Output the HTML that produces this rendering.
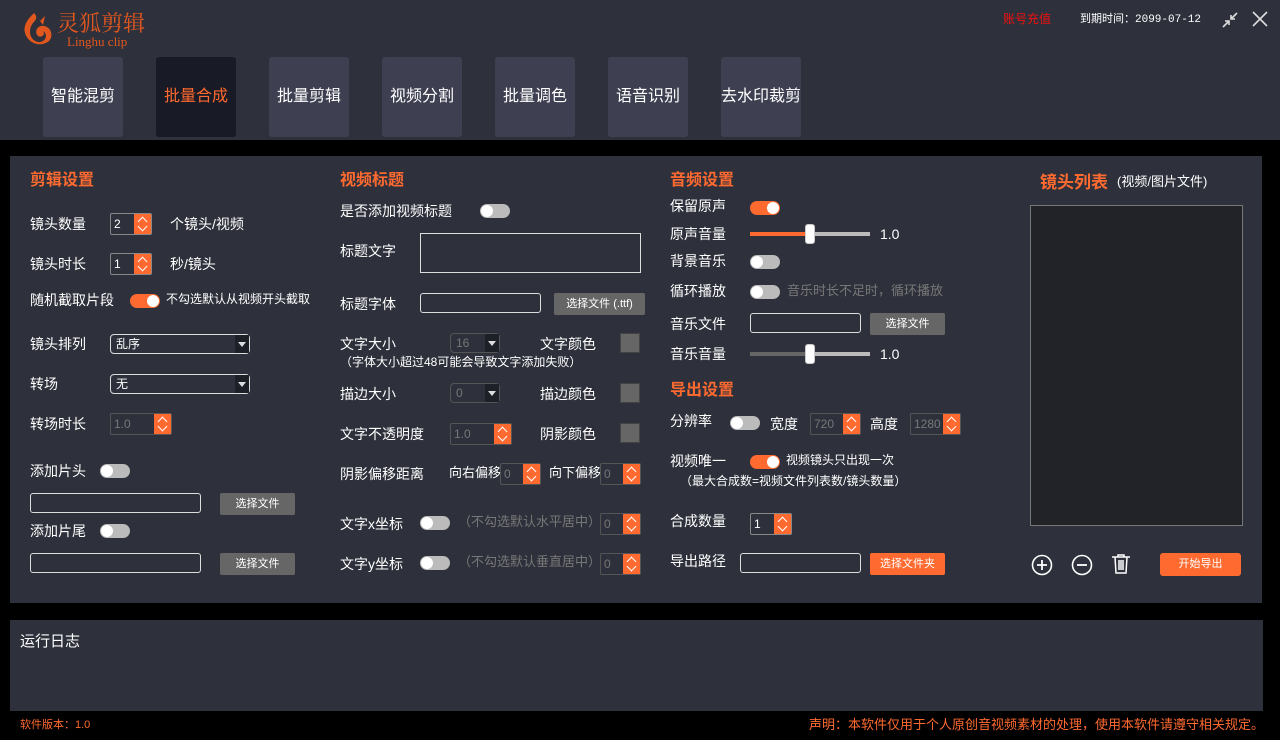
<!DOCTYPE html>
<html><head><meta charset="utf-8"><style>
*{margin:0;padding:0;box-sizing:border-box}
body{width:1280px;height:740px;background:#000;font-family:"Liberation Sans","Noto Sans CJK SC",sans-serif;color:#fff;position:relative;overflow:hidden;font-size:14px}
.a{position:absolute;white-space:nowrap;line-height:1.15}
.hdr{left:0;top:0;width:1280px;height:140px;background:#2e313b}
.tab{top:57px;width:80px;height:80px;background:#3e4052;border-radius:3px;font-size:16px;line-height:80px;text-align:center}
.panel{background:#2e313b}
.h{color:#ff6a30;font-size:16px;font-weight:bold}
.spin{height:22px;border:1px solid #888;border-radius:2px;background:#2e313b;font-size:12px;line-height:20px;padding-left:3px;color:#fff}
.spin i{position:absolute;right:0;top:0;width:17px;height:20px;background:#ff6a30}
.spin i:before{content:"";position:absolute;left:5px;top:4px;width:6px;height:6px;border-left:1.5px solid #fff;border-top:1.5px solid #fff;transform:rotate(45deg)}
.spin i:after{content:"";position:absolute;left:5px;top:9px;width:6px;height:6px;border-right:1.5px solid #fff;border-bottom:1.5px solid #fff;transform:rotate(45deg)}
.dis{color:#777;border-color:#555}
.tg{width:30px;height:14px;border-radius:7px;background:#bbb}
.tg:after{content:"";position:absolute;left:1px;top:1px;width:12px;height:12px;border-radius:6px;background:#fff}
.tg.on{background:#ff6a30}.tg.on:after{left:17px}
.inp{height:20px;border:1px solid #ddd;border-radius:3px;background:#2e313b}
.btn{height:22px;background:#666;border-radius:2px;font-size:11px;line-height:22px;text-align:center}
.ob{background:#ff6a30}
.sel{height:20px;border:1px solid #ddd;border-radius:4px;font-size:12px;line-height:18px;padding-left:5px}
.sel i{position:absolute;right:0;top:0;width:14px;height:18px;background:#1e2028}
.sel i:after{content:"";position:absolute;left:3px;top:7px;border:4px solid transparent;border-top:5px solid #ddd}
.sel.d{border-color:#555;color:#777}
.sw{width:20px;height:20px;background:#666;border:1px solid #444}
.g{color:#777;font-size:13px}
.sl{height:4px;background:#bbb}
.knob{width:10px;height:20px;background:#fff;border-radius:3px;border:1px solid #ccc}
</style></head><body>
<div class="a hdr"></div>
<svg class="a" style="left:20px;top:10px" width="34" height="40" viewBox="0 0 34 38"><path d="M14 2 C8 8 3 14 5 22 C8 32 20 37 29 30 C34 25 31 16 24 15 C17 14 14 21 18 25 C21 27 26 24 23 20 C29 24 25 32 18 31 C9 29 8 18 13 12 C16 9 18 6 14 2Z" fill="#e2571e"/><path d="M15 3 L20 10 L25 5 L23 14Z" fill="#e2571e"/></svg>
<div class="a" style="left:57px;top:10px;font-size:22px;color:#e2571e;font-family:'Noto Serif CJK SC',serif">灵狐剪辑</div>
<div class="a" style="left:67px;top:35px;font-size:13px;color:#e2571e;font-family:'Liberation Serif',serif">Linghu clip</div>
<div class="a" style="left:1003px;top:13px;font-size:12px;color:#f01010">账号充值</div>
<div class="a" style="left:1080px;top:13px;font-size:11px">到期时间：<span style="font-family:'Liberation Mono',monospace;font-size:11px">2099-07-12</span></div>
<svg class="a" style="left:1221px;top:11px" width="18" height="18"><path d="M2 16 L8 10 M4 10 H8 V14 M16 2 L10 8 M10 4 V8 H14" stroke="#ddd" stroke-width="1.6" fill="none"/></svg>
<svg class="a" style="left:1251px;top:10px" width="18" height="18"><path d="M2 2 L16 16 M16 2 L2 16" stroke="#ddd" stroke-width="1.6"/></svg>
<div class="a tab" style="left:43px;line-height:80px">智能混剪</div>
<div class="a tab" style="left:156px;background:#181a25;color:#ff6a30;line-height:80px">批量合成</div>
<div class="a tab" style="left:269px;line-height:80px">批量剪辑</div>
<div class="a tab" style="left:382px;line-height:80px">视频分割</div>
<div class="a tab" style="left:495px;line-height:80px">批量调色</div>
<div class="a tab" style="left:608px;line-height:80px">语音识别</div>
<div class="a tab" style="left:721px;line-height:80px">去水印裁剪</div>

<div class="a panel" style="left:10px;top:156px;width:1252px;height:447px"></div>
<div class="a h" style="left:30px;top:172px">剪辑设置</div>
<div class="a" style="left:30px;top:216px">镜头数量</div>
<div class="a spin" style="left:110px;top:213px;width:42px;line-height:20px">2<i></i></div>
<div class="a" style="left:170px;top:216px">个镜头/视频</div>
<div class="a" style="left:30px;top:256px">镜头时长</div>
<div class="a spin" style="left:110px;top:253px;width:42px;line-height:20px">1<i></i></div>
<div class="a" style="left:170px;top:256px">秒/镜头</div>
<div class="a" style="left:30px;top:292px">随机截取片段</div>
<div class="a tg on" style="left:130px;top:294px"></div>
<div class="a" style="left:166px;top:293px;font-size:12px">不勾选默认从视频开头截取</div>
<div class="a" style="left:30px;top:336px">镜头排列</div>
<div class="a sel" style="left:110px;top:334px;width:140px;line-height:18px">乱序<i></i></div>
<div class="a" style="left:30px;top:376px">转场</div>
<div class="a sel" style="left:110px;top:374px;width:140px;line-height:18px">无<i></i></div>
<div class="a" style="left:30px;top:416px">转场时长</div>
<div class="a spin dis" style="left:110px;top:413px;width:62px;line-height:20px">1.0<i></i></div>
<div class="a" style="left:30px;top:463px">添加片头</div>
<div class="a tg" style="left:100px;top:464px"></div>
<div class="a inp" style="left:30px;top:493px;width:171px"></div>
<div class="a btn" style="left:220px;top:493px;width:75px;line-height:22px">选择文件</div>
<div class="a" style="left:30px;top:523px">添加片尾</div>
<div class="a tg" style="left:100px;top:524px"></div>
<div class="a inp" style="left:30px;top:553px;width:171px"></div>
<div class="a btn" style="left:220px;top:553px;width:75px;line-height:22px">选择文件</div>

<div class="a h" style="left:340px;top:172px">视频标题</div>
<div class="a" style="left:340px;top:203px">是否添加视频标题</div>
<div class="a tg" style="left:480px;top:204px"></div>
<div class="a" style="left:340px;top:243px">标题文字</div>
<div class="a inp" style="left:420px;top:233px;width:221px;height:40px;border-radius:0"></div>
<div class="a" style="left:340px;top:296px">标题字体</div>
<div class="a inp" style="left:420px;top:293px;width:121px"></div>
<div class="a btn" style="left:554px;top:293px;width:91px;line-height:22px">选择文件 (.ttf)</div>
<div class="a" style="left:340px;top:336px">文字大小</div>
<div class="a sel d" style="left:450px;top:333px;width:50px;line-height:18px">16<i></i></div>
<div class="a" style="left:540px;top:336px">文字颜色</div>
<div class="a sw" style="left:620px;top:333px"></div>
<div class="a" style="left:340px;top:356px;font-size:12px">（字体大小超过48可能会导致文字添加失败）</div>
<div class="a" style="left:340px;top:386px">描边大小</div>
<div class="a sel d" style="left:450px;top:383px;width:50px;line-height:18px">0<i></i></div>
<div class="a" style="left:540px;top:386px">描边颜色</div>
<div class="a sw" style="left:620px;top:383px"></div>
<div class="a" style="left:340px;top:426px">文字不透明度</div>
<div class="a spin dis" style="left:450px;top:423px;width:62px;line-height:20px">1.0<i></i></div>
<div class="a" style="left:540px;top:426px">阴影颜色</div>
<div class="a sw" style="left:620px;top:423px"></div>
<div class="a" style="left:340px;top:466px">阴影偏移距离</div>
<div class="a" style="left:449px;top:466px;font-size:13px">向右偏移</div>
<div class="a spin dis" style="left:500px;top:463px;width:41px;line-height:20px">0<i></i></div>
<div class="a" style="left:549px;top:466px;font-size:13px">向下偏移</div>
<div class="a spin dis" style="left:600px;top:463px;width:41px;line-height:20px">0<i></i></div>
<div class="a" style="left:340px;top:516px">文字x坐标</div>
<div class="a tg" style="left:420px;top:516px"></div>
<div class="a g" style="left:458px;top:515px">（不勾选默认水平居中）</div>
<div class="a spin dis" style="left:600px;top:513px;width:41px;line-height:20px">0<i></i></div>
<div class="a" style="left:340px;top:556px">文字y坐标</div>
<div class="a tg" style="left:420px;top:556px"></div>
<div class="a g" style="left:458px;top:555px">（不勾选默认垂直居中）</div>
<div class="a spin dis" style="left:600px;top:553px;width:41px;line-height:20px">0<i></i></div>

<div class="a h" style="left:670px;top:172px">音频设置</div>
<div class="a" style="left:670px;top:198px">保留原声</div>
<div class="a tg on" style="left:750px;top:201px"></div>
<div class="a" style="left:670px;top:226px">原声音量</div>
<div class="a sl" style="left:750px;top:232px;width:120px"></div>
<div class="a sl" style="left:750px;top:232px;width:60px;background:#ff6a30"></div>
<div class="a knob" style="left:805px;top:224px"></div>
<div class="a" style="left:880px;top:226px">1.0</div>
<div class="a" style="left:670px;top:253px">背景音乐</div>
<div class="a tg" style="left:750px;top:255px"></div>
<div class="a" style="left:670px;top:283px">循环播放</div>
<div class="a tg" style="left:750px;top:285px"></div>
<div class="a g" style="left:787px;top:284px">音乐时长不足时，循环播放</div>
<div class="a" style="left:670px;top:316px">音乐文件</div>
<div class="a inp" style="left:750px;top:313px;width:111px"></div>
<div class="a btn" style="left:870px;top:313px;width:75px;line-height:22px">选择文件</div>
<div class="a" style="left:670px;top:346px">音乐音量</div>
<div class="a sl" style="left:750px;top:352px;width:120px"></div>
<div class="a sl" style="left:750px;top:352px;width:60px;background:#666"></div>
<div class="a knob" style="left:805px;top:344px"></div>
<div class="a" style="left:880px;top:346px">1.0</div>
<div class="a h" style="left:670px;top:382px">导出设置</div>
<div class="a" style="left:670px;top:413px">分辨率</div>
<div class="a tg" style="left:730px;top:416px"></div>
<div class="a" style="left:770px;top:416px">宽度</div>
<div class="a spin dis" style="left:810px;top:413px;width:51px;line-height:20px">720<i></i></div>
<div class="a" style="left:870px;top:416px">高度</div>
<div class="a spin dis" style="left:910px;top:413px;width:51px;line-height:20px">1280<i></i></div>
<div class="a" style="left:670px;top:453px">视频唯一</div>
<div class="a tg on" style="left:750px;top:455px"></div>
<div class="a" style="left:786px;top:454px;font-size:12px">视频镜头只出现一次</div>
<div class="a" style="left:680px;top:475px;font-size:12px">（最大合成数=视频文件列表数/镜头数量）</div>
<div class="a" style="left:670px;top:513px">合成数量</div>
<div class="a spin" style="left:750px;top:513px;width:42px;line-height:20px">1<i></i></div>
<div class="a" style="left:670px;top:553px">导出路径</div>
<div class="a inp" style="left:740px;top:553px;width:121px"></div>
<div class="a btn ob" style="left:870px;top:553px;width:75px;line-height:22px">选择文件夹</div>

<div class="a h" style="left:1040px;top:173px;font-size:17px">镜头列表</div>
<div class="a" style="left:1117px;top:175px;font-size:13px">(视频/图片文件)</div>
<div class="a" style="left:1030px;top:205px;width:213px;height:321px;background:#222328;border:1px solid #777"></div>
<svg class="a" style="left:1031px;top:554px" width="22" height="22"><circle cx="11" cy="11" r="9.5" stroke="#fff" stroke-width="1.6" fill="none"/><path d="M6 11H16M11 6V16" stroke="#fff" stroke-width="1.8"/></svg>
<svg class="a" style="left:1071px;top:554px" width="22" height="22"><circle cx="11" cy="11" r="9.5" stroke="#fff" stroke-width="1.6" fill="none"/><path d="M6 11H16" stroke="#fff" stroke-width="1.8"/></svg>
<svg class="a" style="left:1111px;top:554px" width="20" height="21"><path d="M1 3H19M7 3V1H13V3M4 3L5 19H15L16 3M8 6V16M10 6V16M12 6V16" stroke="#fff" stroke-width="1.5" fill="none"/></svg>
<div class="a btn ob" style="left:1160px;top:553px;width:81px;height:23px;font-size:11px;border-radius:3px;line-height:23px">开始导出</div>

<div class="a panel" style="left:10px;top:620px;width:1253px;height:91px"></div>
<div class="a" style="left:20px;top:633px;font-size:15px">运行日志</div>
<div class="a" style="left:20px;top:719px;font-size:11px;color:#ff6a30">软件版本：1.0</div>
<div class="a" style="left:809px;top:718px;font-size:13px;color:#ff6a30">声明：本软件仅用于个人原创音视频素材的处理，使用本软件请遵守相关规定。</div>
</body></html>
